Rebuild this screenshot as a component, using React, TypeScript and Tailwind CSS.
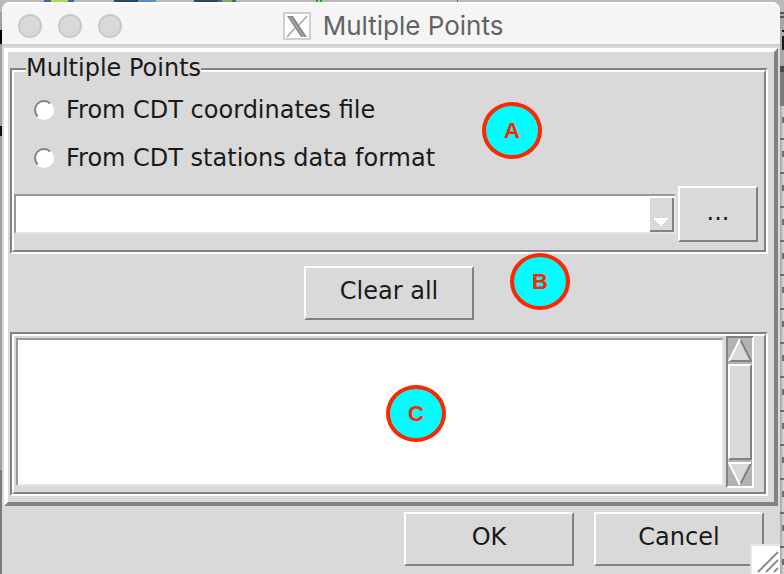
import { ReactNode } from "react";

const raised = "border-2 border-t-white border-l-white border-r-[#828282] border-b-[#828282]";
const tk = "font-['DejaVu_Sans',sans-serif] text-2xl leading-8 text-[#1a1a1a]";
const radio =
  "h-5 w-5 appearance-none rounded-full border-2 border-t-[#828282] border-r-white border-b-white border-l-[#828282] bg-white checked:bg-[#b03060]";
const light = "h-6 w-6 rounded-full border-2 border-[#c9c9c9] bg-[#d9d9d9]";

function TkButton({ children, className }: { children: ReactNode; className: string }) {
  return (
    <button type="button" className={`${raised} ${tk} flex items-center justify-center bg-[#d9d9d9] pb-1 ${className}`}>
      {children}
    </button>
  );
}

function Badge({ label, className }: { label: string; className: string }) {
  return (
    <span
      className={`absolute flex h-[57px] w-[60px] items-center justify-center rounded-[50%] border-4 border-[#ff2600] bg-[#00fdff] font-['Liberation_Sans',Arial,sans-serif] text-[22px] font-bold text-[#ff2600] ${className}`}
    >
      {label}
    </span>
  );
}

function XLogo() {
  return (
    <svg viewBox="0 0 28 28" className="h-7 w-7" aria-hidden="true">
      <rect x="1" y="1" width="26" height="26" fill="#fff" stroke="#cfcfcf" strokeWidth="2" />
      <path d="M24 4 L16 13 M12 16 L4 25" stroke="#a9a9a9" strokeWidth="1.6" />
      <path d="M4 4 H10 L24 25 H18 Z" fill="#8c8c8c" />
      <path d="M7 5 L21 25" stroke="#b5b5b5" strokeWidth="1" />
    </svg>
  );
}

function Backdrop() {
  return (
    <svg className="absolute inset-0 h-full w-full" aria-hidden="true">
      <defs>
        <pattern id="ticks" width="4" height="34" patternUnits="userSpaceOnUse" x="780" y="172">
          <rect width="4" height="34" fill="#cfcfcf" />
          <rect width="2" height="34" fill="#b0b0b0" />
          <rect width="4" height="2" fill="#6a6a6a" />
          <rect x="2" y="13" width="2" height="6" fill="#6f6f6f" />
        </pattern>
      </defs>
      <rect width="100%" height="100%" fill="#b9b9b9" />
      <rect x="44" width="30" height="2" fill="#3b66a8" />
      <rect x="51" width="17" height="2" fill="#a6dc5c" />
      <rect x="114" width="24" height="2" fill="#27485e" />
      <rect x="138" width="18" height="2" fill="#5b8ec4" />
      <rect x="194" width="24" height="2" fill="#27485e" />
      <rect x="218" width="18" height="2" fill="#3b66a8" />
      <rect x="222" width="10" height="2" fill="#76b74c" />
      <rect x="316" width="2" height="2" fill="#00b400" />
      <rect x="320" width="2" height="2" fill="#00b400" />
      <rect x="457" width="1" height="2" fill="#666" />
      <rect y="12" width="2" height="490" fill="#a0a0a0" />
      <rect y="30" width="2" height="14" fill="#000" />
      <rect y="126" width="2" height="10" fill="#111" />
      <rect y="470" width="2" height="104" fill="#7a7a7a" />
      <rect x="780" y="12" width="4" height="54" fill="#a8a8a8" />
      <rect x="780" y="12" width="4" height="2" fill="#555" />
      <rect x="780" y="16" width="4" height="2" fill="#555" />
      <rect x="782" y="30" width="2" height="2" fill="#111" />
      <rect x="782" y="36" width="2" height="14" fill="#1a1a1a" />
      <rect x="780" y="66" width="4" height="40" fill="#7c7c7c" />
      <rect x="780" y="66" width="4" height="6" fill="#4a4a4a" />
      <rect x="780" y="106" width="4" height="468" fill="url(#ticks)" />
    </svg>
  );
}

export default function App() {
  return (
    <div className="relative min-h-screen pt-[2px] pr-1 pl-[2px]">
      <Backdrop />
      <main className="relative flex min-h-[calc(100vh-2px)] flex-col overflow-hidden rounded-t-lg bg-[#d9d9d9]">
        <header className="relative flex h-11 items-center justify-center border-t-2 border-b-2 border-t-white border-b-[#cfcfcf] bg-[#f5f5f5] pt-1">
          <div className="absolute left-4 flex gap-4">
            <button type="button" aria-label="Close" className={light} />
            <button type="button" aria-label="Minimize" className={light} />
            <button type="button" aria-label="Zoom" className={light} />
          </div>
          <div className="flex items-center gap-3 pl-1">
            <XLogo />
            <h1 className="font-['Inter',sans-serif] text-[26px] leading-8 text-[#636363]">Multiple Points</h1>
          </div>
        </header>

        <section className="mx-[2px] mt-[2px] flex flex-col border-4 border-t-white border-r-[#828282] border-b-[#828282] border-l-white px-[2px] pb-[6px]">
          <fieldset className="relative mr-1 mt-4 border-2 border-t-[#828282] border-r-white border-b-white border-l-[#828282]">
            <legend className={`${tk} absolute -top-[18px] left-[14px] bg-[#d9d9d9]`}>Multiple Points</legend>
            <div className="border-2 border-t-white border-r-[#828282] border-b-[#828282] border-l-white pb-2">
              <div className="flex flex-col gap-4 pt-[22px] pl-5">
                <label className={`${tk} flex items-center gap-3`}>
                  <input type="radio" name="source" className={radio} />
                  From CDT coordinates file
                </label>
                <label className={`${tk} flex items-center gap-3`}>
                  <input type="radio" name="source" className={radio} />
                  From CDT stations data format
                </label>
              </div>
              <div className="mt-3 flex items-center gap-[2px] pr-[6px]">
                <div className="relative h-10 flex-1">
                  <select aria-label="File" className="h-full w-full appearance-none border-2 border-t-[#999] border-r-[#e5e5e5] border-b-[#e5e5e5] border-l-[#999] bg-white pl-2">
                    <option value=""></option>
                  </select>
                  <span className="pointer-events-none absolute top-1 right-[2px] bottom-[2px] flex w-6 items-end justify-center border-r-2 border-b-2 border-[#828282] bg-[#d9d9d9] pb-1">
                    <svg viewBox="0 0 14 8" className="h-2 w-[14px]" aria-hidden="true">
                      <path d="M0 0H14V2H12V4H10V6H8V8H6V6H4V4H2V2H0Z" fill="#fff" />
                    </svg>
                  </span>
                </div>
                <TkButton className="h-14 w-20">...</TkButton>
              </div>
            </div>
          </fieldset>

          <TkButton className="mt-3 mr-1 h-[54px] w-[170px] self-center">Clear all</TkButton>

          <div className="mt-3 mr-1 border-2 border-t-[#828282] border-r-white border-b-white border-l-[#828282]">
            <div className="flex gap-[2px] border-2 border-t-white border-r-[#828282] border-b-[#828282] border-l-white pr-[10px] pb-1 pl-[2px]">
              <textarea
                aria-label="Points"
                className="mt-[2px] mb-[2px] h-[148px] min-w-0 flex-1 resize-none border-2 border-t-[#999] border-r-[#e5e5e5] border-b-[#e5e5e5] border-l-[#999] bg-white p-1 outline-none"
              />
              <div className="flex h-[152px] w-7 flex-col justify-between border-2 border-t-[#828282] border-r-white border-b-white border-l-[#828282] bg-[#b3b3b3]">
                <button type="button" aria-label="Scroll up" className="h-6 w-6">
                  <svg viewBox="0 0 24 24" className="h-6 w-6" aria-hidden="true">
                    <path d="M12 1L1 23H23Z" fill="#d9d9d9" />
                    <path d="M12 1L23 23H1" fill="none" stroke="#828282" strokeWidth="2" />
                    <path d="M12 1L1 23" stroke="#fff" strokeWidth="2" />
                  </svg>
                </button>
                <div className={`${raised} my-[2px] flex-1 bg-[#d9d9d9]`} />
                <button type="button" aria-label="Scroll down" className="h-6 w-6">
                  <svg viewBox="0 0 24 24" className="h-6 w-6" aria-hidden="true">
                    <path d="M1 1H23L12 23Z" fill="#d9d9d9" />
                    <path d="M23 1L12 23" stroke="#828282" strokeWidth="2" />
                    <path d="M23 1H1L12 23" fill="none" stroke="#fff" strokeWidth="2" />
                  </svg>
                </button>
              </div>
            </div>
          </div>
        </section>

        <footer className="flex justify-end gap-5 pt-[6px] pr-4 pb-2">
          <TkButton className="h-[54px] w-[170px]">OK</TkButton>
          <TkButton className="h-[54px] w-[170px]">Cancel</TkButton>
        </footer>

        <Badge label="A" className="top-[100px] left-[480px]" />
        <Badge label="B" className="top-[251px] left-[508px]" />
        <Badge label="C" className="top-[383px] left-[384px]" />

        <span className="absolute right-0 bottom-0 border-t-2 border-l-2 border-[#e5e5e5] bg-white">
          <svg viewBox="0 0 28 28" className="h-7 w-7" aria-hidden="true">
            <path d="M6 26L26 6M14 26L26 14M22 26L26 22" stroke="#8f8f8f" strokeWidth="2" />
          </svg>
        </span>
      </main>
    </div>
  );
}
